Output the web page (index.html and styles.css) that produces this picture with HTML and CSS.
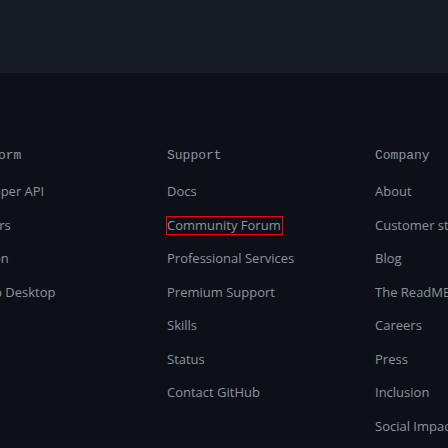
FILE: index.html
```html
<!DOCTYPE html>
<html>
<head>
<meta charset="utf-8">
<link rel="stylesheet" href="styles.css">
</head>
<body>
<div class="band"></div>
<footer class="footer">
  <div class="cols">
    <div class="col">
      <h2 class="head">Platform</h2>
      <ul class="links">
        <li><a class="link">Developer API</a></li>
        <li><a class="link">Partners</a></li>
        <li><a class="link">Electron</a></li>
        <li><a class="link">GitHub Desktop</a></li>
      </ul>
    </div>
    <div class="col">
      <h2 class="head">Support</h2>
      <ul class="links">
        <li><a class="link">Docs</a></li>
        <li><a class="link focus">Community Forum</a></li>
        <li><a class="link">Professional Services</a></li>
        <li><a class="link">Premium Support</a></li>
        <li><a class="link">Skills</a></li>
        <li><a class="link">Status</a></li>
        <li><a class="link">Contact GitHub</a></li>
      </ul>
    </div>
    <div class="col">
      <h2 class="head">Company</h2>
      <ul class="links">
        <li><a class="link">About</a></li>
        <li><a class="link">Customer stories</a></li>
        <li><a class="link">Blog</a></li>
        <li><a class="link">The ReadME Project</a></li>
        <li><a class="link">Careers</a></li>
        <li><a class="link">Press</a></li>
        <li><a class="link">Inclusion</a></li>
        <li><a class="link">Social Impact</a></li>
      </ul>
    </div>
  </div>
</footer>
</body>
</html>
```
FILE: styles.css
```css
html, body {
  margin: 0;
  padding: 0;
  background: #0d1117;
  overflow: hidden;
}
body {
  font-family: "Open Sans", "Noto Sans", sans-serif;
  color: #8b949e;
}
.band {
  height: 73px;
  background: #171b22;
}
.footer {
  padding-top: 73px;
}
.cols {
  display: flex;
  margin-left: -41px;
}
.col {
  flex: 0 0 208px;
}
.head {
  margin: 0 0 15px;
  font-family: "Liberation Mono", "DejaVu Sans Mono", monospace;
  font-weight: 400;
  font-size: 13px;
  line-height: 20px;
  color: #8b949e;
}
.links {
  list-style: none;
  margin: 0;
  padding: 0;
  display: flex;
  flex-direction: column;
  gap: 12.5px;
}
.links li {
  font-size: 13px;
  line-height: 21px;
  white-space: nowrap;
}
.link {
  color: #8b949e;
}
.focus {
  outline: 1px solid #ff0000;
  display: inline-block;
  line-height: 17px;
  padding-right: 1px;
}
```
